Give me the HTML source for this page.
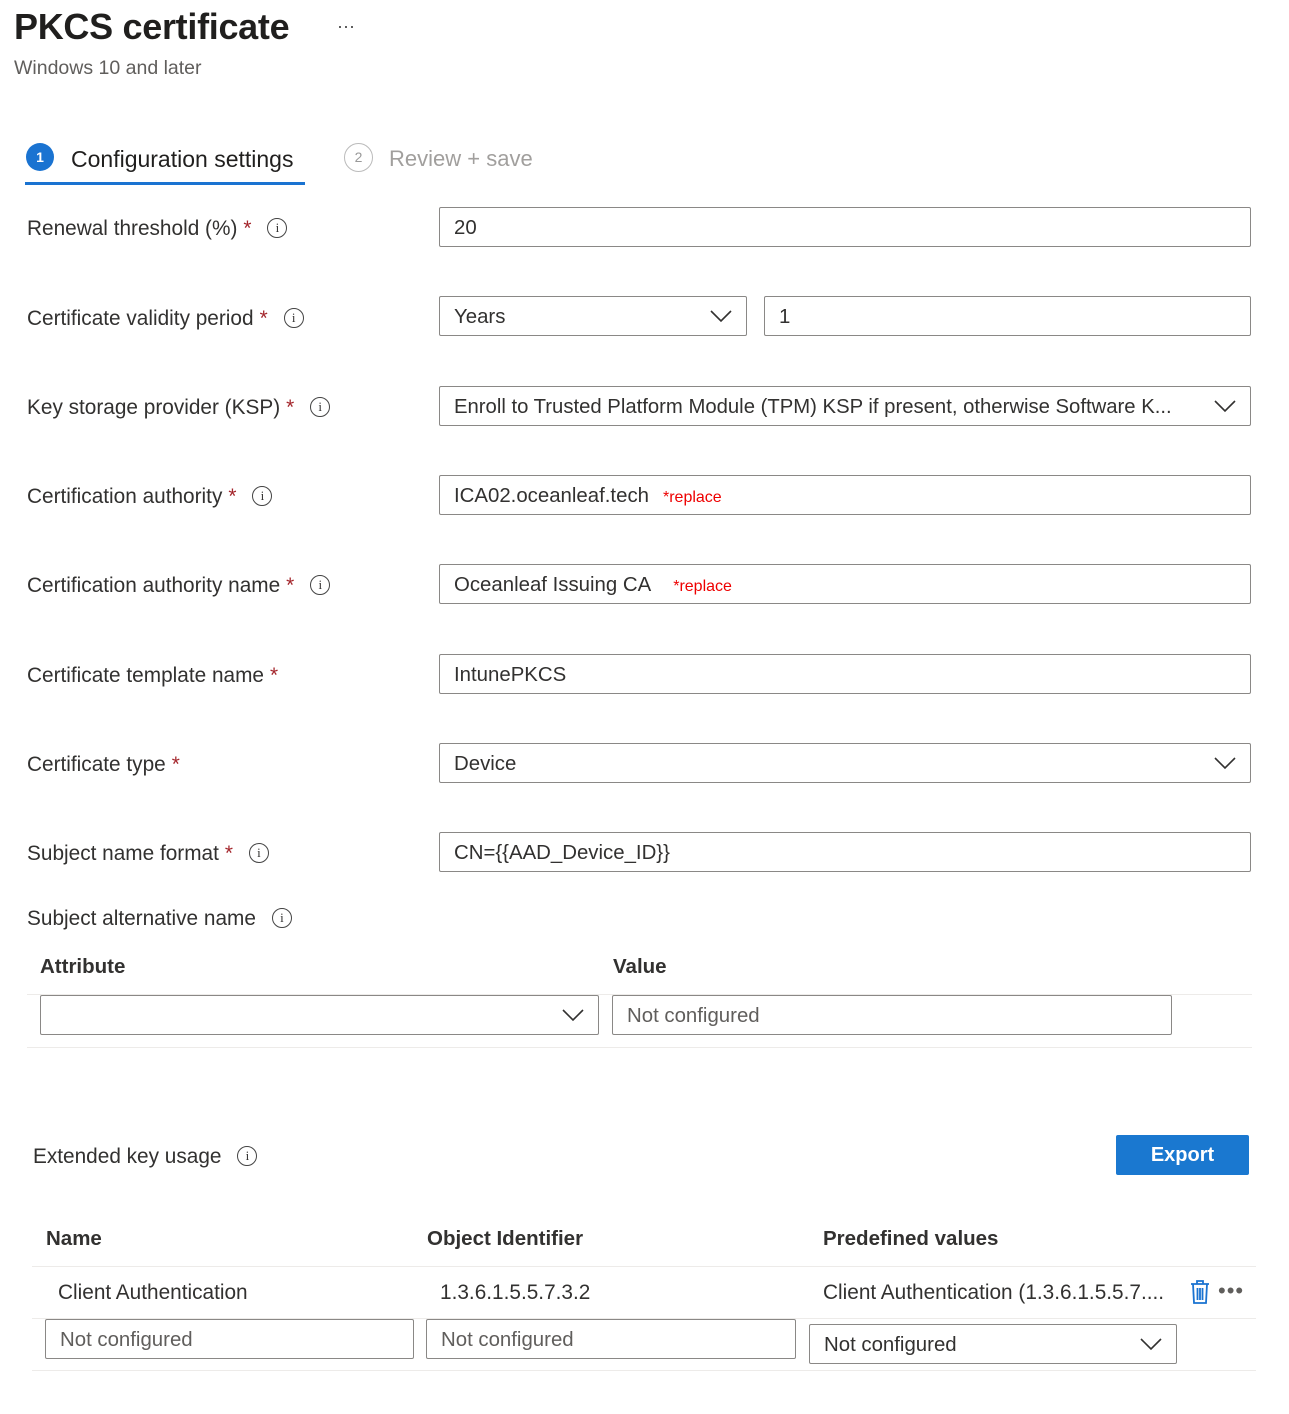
<!DOCTYPE html>
<html><head><meta charset="utf-8"><style>
*{box-sizing:border-box;margin:0;padding:0}
body{width:1289px;height:1414px;background:#fff;font-family:"Liberation Sans",sans-serif;color:#323130;position:relative;overflow:hidden}
.a{position:absolute;white-space:nowrap}
.lbl{font-size:20.8px;color:#323130;line-height:26px}
.req{color:#a4262c;margin-left:6px}
.info{display:inline-block;width:20px;height:20px;border:1.3px solid #444;border-radius:50%;font-size:13px;line-height:18px;text-align:center;vertical-align:middle;margin-left:16px;position:relative;top:-2px;font-family:"Liberation Serif",serif}
.box{position:absolute;height:40px;border:1px solid #8a8886;border-radius:2px;font-size:20.4px;line-height:40px;padding-left:14px;white-space:nowrap;overflow:hidden;background:#fff}
.chev{position:absolute;right:14px;top:12px}
.rep{color:#e00;font-size:16px;margin-left:14px}
.ph{color:#605e5c}
.hr{position:absolute;height:1px;background:#edebe9}
.th{font-size:20.5px;font-weight:bold;color:#323130}
</style></head><body>
<div class="a" style="left:14px;top:6px;font-size:36px;font-weight:bold;color:#201f1e;letter-spacing:-0.3px">PKCS certificate</div>
<div class="a" style="left:337px;top:16px;font-size:18px;color:#444">···</div>
<div class="a" style="left:14px;top:57px;font-size:19.5px;color:#605e5c">Windows 10 and later</div>

<div class="a" style="left:26px;top:143px;width:28px;height:28px;border-radius:50%;background:#1a73d1;color:#fff;font-size:14px;font-weight:bold;text-align:center;line-height:28px">1</div>
<div class="a" style="left:71px;top:146px;font-size:23px;color:#201f1e">Configuration settings</div>
<div class="a" style="left:25px;top:182px;width:280px;height:3px;background:#1a73d1"></div>
<div class="a" style="left:344px;top:143px;width:29px;height:29px;border-radius:50%;border:1.5px solid #bbb;color:#999;font-size:14px;text-align:center;line-height:26px">2</div>
<div class="a" style="left:389px;top:146px;font-size:22px;color:#a19f9d">Review + save</div>

<div class="a lbl" style="left:27px;top:216px">Renewal threshold (%)<span class="req">*</span><span class="info">i</span></div>
<div class="box" style="left:439px;top:207px;width:812px">20</div>

<div class="a lbl" style="left:27px;top:306px">Certificate validity period<span class="req">*</span><span class="info">i</span></div>
<div class="box" style="left:439px;top:296px;width:308px">Years<svg class="chev" width="22" height="14" viewBox="0 0 22 14"><path d="M1 2l10 10 10-10" fill="none" stroke="#323130" stroke-width="1.6"/></svg></div>
<div class="box" style="left:764px;top:296px;width:487px">1</div>

<div class="a lbl" style="left:27px;top:395px">Key storage provider (KSP)<span class="req">*</span><span class="info">i</span></div>
<div class="box" style="left:439px;top:386px;width:812px;font-size:20.3px">Enroll to Trusted Platform Module (TPM) KSP if present, otherwise Software K...<svg class="chev" width="22" height="14" viewBox="0 0 22 14"><path d="M1 2l10 10 10-10" fill="none" stroke="#323130" stroke-width="1.6"/></svg></div>

<div class="a lbl" style="left:27px;top:484px">Certification authority<span class="req">*</span><span class="info">i</span></div>
<div class="box" style="left:439px;top:475px;width:812px">ICA02.oceanleaf.tech<span class="rep">*replace</span></div>

<div class="a lbl" style="left:27px;top:573px">Certification authority name<span class="req">*</span><span class="info">i</span></div>
<div class="box" style="left:439px;top:564px;width:812px">Oceanleaf Issuing CA<span class="rep" style="margin-left:22px">*replace</span></div>

<div class="a lbl" style="left:27px;top:663px">Certificate template name<span class="req">*</span></div>
<div class="box" style="left:439px;top:654px;width:812px">IntunePKCS</div>

<div class="a lbl" style="left:27px;top:752px">Certificate type<span class="req">*</span></div>
<div class="box" style="left:439px;top:743px;width:812px">Device<svg class="chev" width="22" height="14" viewBox="0 0 22 14"><path d="M1 2l10 10 10-10" fill="none" stroke="#323130" stroke-width="1.6"/></svg></div>

<div class="a lbl" style="left:27px;top:841px">Subject name format<span class="req">*</span><span class="info">i</span></div>
<div class="box" style="left:439px;top:832px;width:812px">CN={{AAD_Device_ID}}</div>

<div class="a lbl" style="left:27px;top:906px">Subject alternative name<span class="info">i</span></div>
<div class="a th" style="left:40px;top:955px">Attribute</div>
<div class="a th" style="left:613px;top:955px">Value</div>
<div class="hr" style="left:27px;top:994px;width:1225px"></div>
<div class="box" style="left:40px;top:995px;width:559px"><svg class="chev" width="22" height="14" viewBox="0 0 22 14"><path d="M1 2l10 10 10-10" fill="none" stroke="#323130" stroke-width="1.6"/></svg></div>
<div class="box ph" style="left:612px;top:995px;width:560px">Not configured</div>
<div class="hr" style="left:27px;top:1047px;width:1225px"></div>

<div class="a lbl" style="left:33px;top:1144px">Extended key usage<span class="info">i</span></div>
<div class="a" style="left:1116px;top:1135px;width:133px;height:40px;background:#1a78d0;border-radius:2px;color:#fff;font-size:20px;font-weight:bold;text-align:center;line-height:40px">Export</div>

<div class="a th" style="left:46px;top:1227px">Name</div>
<div class="a th" style="left:427px;top:1227px">Object Identifier</div>
<div class="a th" style="left:823px;top:1227px">Predefined values</div>
<div class="hr" style="left:32px;top:1266px;width:1224px"></div>
<div class="a lbl" style="left:58px;top:1280px">Client Authentication</div>
<div class="a lbl" style="left:440px;top:1280px">1.3.6.1.5.5.7.3.2</div>
<div class="a lbl" style="left:823px;top:1280px">Client Authentication (1.3.6.1.5.5.7....</div>
<svg class="a" style="left:1188px;top:1279px" width="24" height="26" viewBox="0 0 24 26"><path d="M3 5h18M9 5V2h6v3M5 5l1 19h12l1-19M9.5 9v12M12 9v12M14.5 9v12" fill="none" stroke="#1a73d1" stroke-width="1.8"/></svg>
<div class="a" style="left:1218px;top:1278px;font-size:22px;color:#605e5c;letter-spacing:1px">•••</div>
<div class="hr" style="left:32px;top:1318px;width:1224px"></div>
<div class="box ph" style="left:45px;top:1319px;width:369px">Not configured</div>
<div class="box ph" style="left:426px;top:1319px;width:370px">Not configured</div>
<div class="box" style="left:809px;top:1324px;width:368px">Not configured<svg class="chev" width="22" height="14" viewBox="0 0 22 14"><path d="M1 2l10 10 10-10" fill="none" stroke="#323130" stroke-width="1.6"/></svg></div>
<div class="hr" style="left:32px;top:1370px;width:1224px"></div>
</body></html>
